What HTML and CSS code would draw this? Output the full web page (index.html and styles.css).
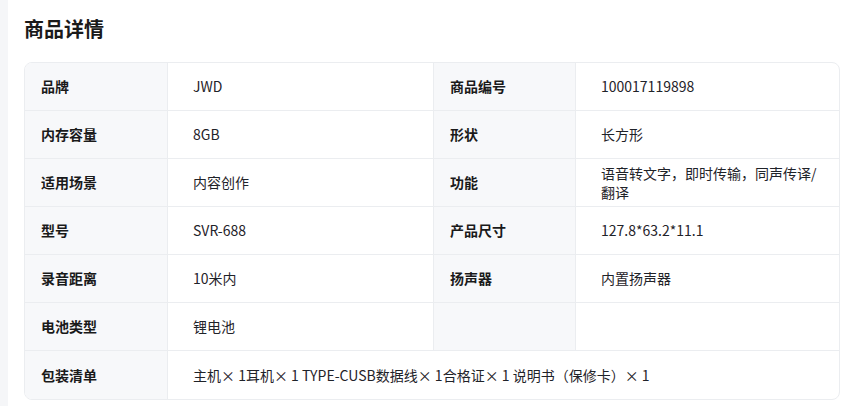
FILE: index.html
```html
<!DOCTYPE html>
<html lang="zh">
<head>
<meta charset="utf-8">
<link rel="stylesheet" href="styles.css">
</head>
<body>
<div class="panel">
  <h2 class="title">商品详情</h2>
  <div class="spec">
    <div class="lbl">品牌</div><div class="val">JWD</div>
    <div class="lbl">商品编号</div><div class="val last">100017119898</div>

    <div class="lbl">内存容量</div><div class="val">8GB</div>
    <div class="lbl">形状</div><div class="val last">长方形</div>

    <div class="lbl">适用场景</div><div class="val">内容创作</div>
    <div class="lbl">功能</div><div class="val last">语音转文字，即时传输，同声传译/翻译</div>

    <div class="lbl">型号</div><div class="val">SVR-688</div>
    <div class="lbl">产品尺寸</div><div class="val last">127.8*63.2*11.1</div>

    <div class="lbl">录音距离</div><div class="val">10米内</div>
    <div class="lbl">扬声器</div><div class="val last">内置扬声器</div>

    <div class="lbl">电池类型</div><div class="val">锂电池</div>
    <div class="lbl"></div><div class="val last"></div>

    <div class="lbl bottom">包装清单</div><div class="val wide bottom last">主机× 1耳机× 1 TYPE-CUSB数据线× 1合格证× 1 说明书（保修卡）× 1</div>
  </div>
</div>
</body>
</html>
```

FILE: styles.css
```css
html, body {
  margin: 0;
  padding: 0;
  overflow: hidden;
  background: #f5f6f8;
}
body {
  padding-left: 8px;
  font-family: "Noto Sans CJK SC", "Noto Sans", sans-serif;
  color: #1f2329;
}
.panel {
  width: 848px;
  height: 406px;
  background: #ffffff;
  padding: 14px 16px 0 16px;
  box-sizing: border-box;
}
.title {
  margin: 0;
  font-size: 20px;
  font-weight: 700;
  line-height: 30px;
  color: #1a1a1a;
}
.spec {
  margin-top: 18px;
  width: 816px;
  box-sizing: border-box;
  border: 1px solid #ebedf0;
  border-radius: 8px;
  overflow: hidden;
  display: grid;
  grid-template-columns: 143px 266px 142px 1fr;
  grid-auto-rows: 48px;
}
.lbl, .val {
  display: flex;
  align-items: center;
  font-size: 14px;
  line-height: 19px;
  border-bottom: 1px solid #ebedf0;
  border-right: 1px solid #ebedf0;
  box-sizing: border-box;
}
.lbl {
  background: #f7f8fa;
  font-weight: 700;
  padding: 0 16px;
  color: #1a1a1a;
}
.val {
  padding: 0 12px 0 25px;
  color: #1f2329;
}
.last {
  border-right: none;
}
.bottom {
  border-bottom: none;
}
.wide {
  grid-column: span 3;
}
```
